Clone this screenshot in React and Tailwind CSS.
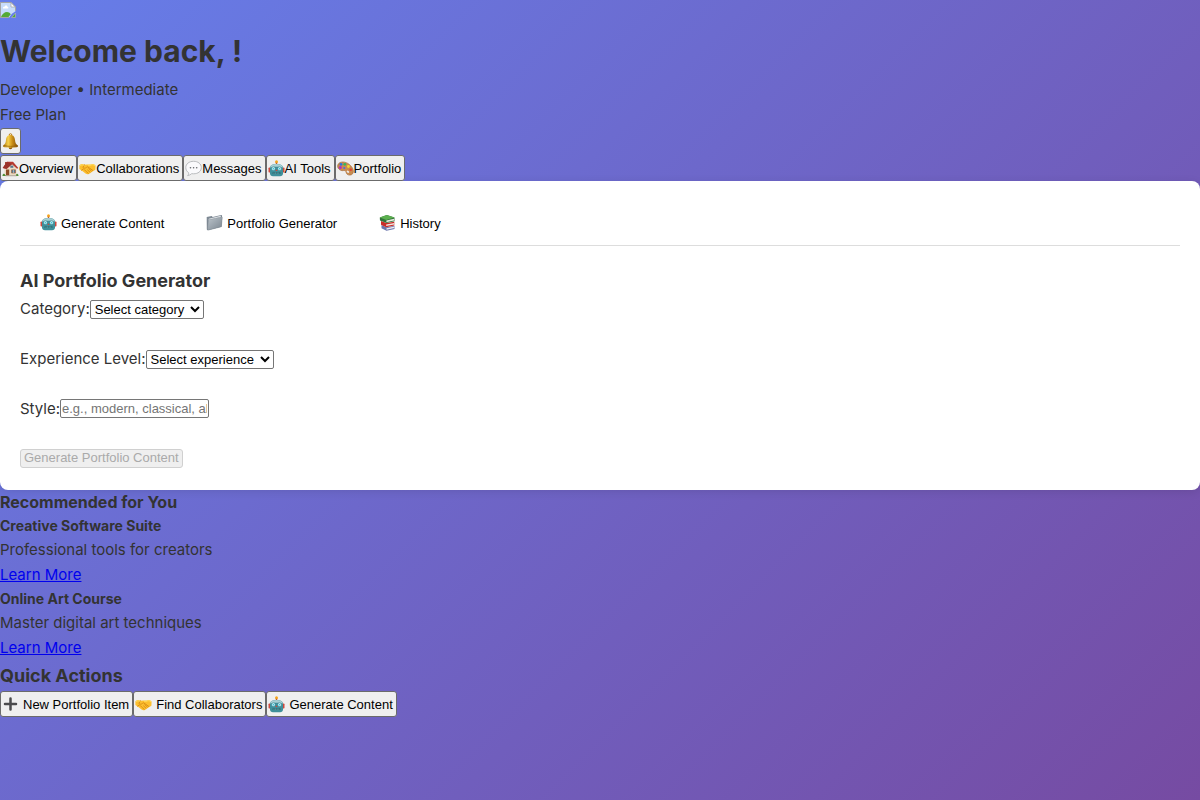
import React from "react";

const iconClass = "h-[17px] w-[17px] shrink-0";

function BrokenImage() {
  return (
    <svg viewBox="0 0 16 16" className="h-4 w-4" role="img" aria-label="Profile">
      <path d="M.5.5h10.7L15.5 5v4.200l-3.600 2.600-2.700 3.700H.5z" fill="#c7dcfb" />
      <path d="M1 15c1-3 3.500-5 6-5 1.500 0 2.800.8 3.800 2.200L8.500 15z" fill="#55aa35" />
      <path d="M3 6.500C2.500 5 4 4.500 4.500 4.800 5 3 7.500 3.300 7.500 5c1.200 0 1.200 1.500.3 1.500z" fill="#fff" />
      <path d="M9.200 15.500H.5V.5h10.700L15.500 5v4" fill="none" stroke="#a5a5a5" />
      <path d="M11 .8V5h4.200z" fill="#fff" stroke="#a5a5a5" strokeWidth=".7" />
      <path d="M15.500 11v4.500h-4z" fill="#55aa35" stroke="#b8b8b8" strokeWidth=".6" />
    </svg>
  );
}

function Bell() {
  return (
    <svg viewBox="0 0 17 17" className={iconClass} aria-hidden="true">
      <defs>
        <linearGradient id="gold" x1="0" x2="1">
          <stop offset="0" stopColor="#a8700c" />
          <stop offset=".35" stopColor="#f7d14a" />
          <stop offset=".62" stopColor="#c98d17" />
          <stop offset="1" stopColor="#7d4b07" />
        </linearGradient>
      </defs>
      <circle cx="8.500" cy="2" r="1.300" fill="none" stroke="#b8801b" />
      <circle cx="8.500" cy="14.400" r="1.800" fill="#8c5609" />
      <path d="M8.500 2C5.300 2 4.300 4.300 4 7c-.3 3-1 4.300-2.900 5.600-.6.800.2 1.500 1.300 1.700 3.500.6 8.700.6 12.200 0 1.100-.2 1.900-.9 1.300-1.700C14 11.300 13.300 10 13 7c-.3-2.700-1.300-5-4.500-5z" fill="url(#gold)" />
      <path d="M2 12.600c4.500 1 8.500 1 13 0" fill="none" stroke="#8c5a08" strokeWidth=".7" />
    </svg>
  );
}

function House() {
  return (
    <svg viewBox="0 0 17 17" className={iconClass} aria-hidden="true">
      <path d="M3 2h2v5H3z" fill="#a04d39" />
      <path d="M2.500 7.500L9 2l5.500 5.500v8h-12z" fill="#eadbc4" />
      <path d="M.7 8L5 1.800h6L16.300 8l-1.200.7L10 4.200 4.700 9z" fill="#b63a31" />
      <path d="M5 1.800L.7 8l3.800.8L10 4z" fill="#9a332b" />
      <path d="M8.300 5.600h3v2.200h-3z" fill="#58758c" />
      <path d="M4 9.500h3.200v6H4z" fill="#8b4d28" />
      <path d="M9.500 9.800h4v3.200h-4z" fill="#507b9c" stroke="#a8683f" strokeWidth=".7" />
      <path d="M11.500 9.800V13" stroke="#e6d5bd" strokeWidth=".6" />
      <path d="M.5 15.600c.2-2 2-2.500 2.700-.7h.6v1.200H.5zM14 16c-.2-1.200.3-2.200 1.200-2.200.8 0 1.300 1 1.300 2.200z" fill="#4f8e35" />
      <path d="M3.500 15.300h11v.9h-11z" fill="#a89b8b" />
    </svg>
  );
}

function Handshake() {
  return (
    <svg viewBox="0 0 17 17" className={iconClass} aria-hidden="true">
      <path d="M.4 5.300C2 3.900 3.500 3.800 5.300 4.700l2.800-.3 3.300.2c1.700-1 3.500-.7 5.200.8l-.2 4.300-2.500 1.500-3.700 2.500c-1.200.8-2.500.6-3.700-.2L2.700 10.600.4 9z" fill="#fcbf2e" />
      <path d="M5.300 4.700L4 7.300c.8 1.300 2.300 1.100 3.600 0l1.100-.5 5 3.600M2.500 10.300l1.800-1.500 1.200 1 .9.900.9.800 1 .8.800 1M9.700 8.500l2.700 2.600M8.600 10l2.400 2.200" fill="none" stroke="#d88a12" strokeWidth=".9" strokeLinecap="round" />
      <path d="M1.200 5.700c1.400-1.100 2.600-1.100 4-.2M9 5.200c1.200.3 2.300.2 3.500-.3 1.200-.4 2.200-.1 3.500.9" fill="none" stroke="#ffe36b" strokeWidth=".8" />
    </svg>
  );
}

function Speech() {
  return (
    <svg viewBox="0 0 17 17" className={iconClass} aria-hidden="true">
      <path d="M8.600 1.300c4.500 0 7.700 2.600 7.700 6.300s-3.200 6.200-7.700 6.200l-2-.1c-1 .9-2.200 1.700-4 1.900.9-.8 1.200-1.800 1-2.900C1.900 11.600.8 9.800.8 7.600c0-3.700 3.300-6.300 7.800-6.300z" fill="#fafafc" stroke="#b2b4b8" strokeWidth=".9" />
      <g fill="#66686c"><circle cx="5.500" cy="7.700" r=".8" /><circle cx="8.600" cy="7.700" r=".8" /><circle cx="11.700" cy="7.700" r=".8" /></g>
    </svg>
  );
}

function Robot() {
  return (
    <svg viewBox="0 0 17 17" className={iconClass} aria-hidden="true">
      <circle cx="8.500" cy="1.700" r="1.500" fill="#f6a51c" />
      <path d="M7.800 2.800h1.400v2H7.800z" fill="#b55b37" />
      <rect x=".5" y="7.500" width="2" height="5" rx=".8" fill="#cf493d" />
      <rect x="14.500" y="7.500" width="2" height="5" rx=".8" fill="#cf493d" />
      <path d="M2 8.200C2 5.300 4.500 4 8.500 4S15 5.300 15 8.200v5c0 2-1.200 3-3 3H5c-1.800 0-3-1-3-3z" fill="#3f8f9a" />
      <path d="M2.300 7.500C2.800 5 5 4.100 8.500 4.100s5.700.9 6.200 3.400c-3-1-9.400-1-12.400 0z" fill="#a9cfd3" />
      <circle cx="5.400" cy="8.700" r="1.900" fill="#e4ffff" stroke="#257b88" strokeWidth=".6" />
      <circle cx="11.600" cy="8.700" r="1.900" fill="#e4ffff" stroke="#257b88" strokeWidth=".6" />
      <circle cx="5.400" cy="8.700" r=".9" fill="#40bfd8" /><circle cx="11.600" cy="8.700" r=".9" fill="#40bfd8" />
      <path d="M8.500 9.300l1 1.600h-2z" fill="#d64436" />
      <rect x="4.500" y="12.100" width="8" height="2" rx=".7" fill="#276c76" />
      <path d="M5.500 13.100h6" stroke="#9fd0d0" strokeWidth=".7" strokeDasharray="1 .6" />
    </svg>
  );
}

function Palette() {
  return (
    <svg viewBox="0 0 17 17" className={iconClass} aria-hidden="true">
      <path d="M1.100 4.300C3.100 1 8.500 1.300 12.400 4.500c3.500 2.900 4.900 6.600 3.400 9-1.300 2-4 2-5.600.8-1.500-1.200-.7-2.700-2-3.500-1.400-.9-2.400.5-4.500-.5C.7 8.800 0 6.500 1.100 4.300z" fill="#c98c50" stroke="#9f6533" strokeWidth=".6" />
      <ellipse cx="10.900" cy="11.800" rx="1.400" ry="1" transform="rotate(35 10.900 11.800)" fill="#eee" />
      <circle cx="3.300" cy="7.500" r="1.500" fill="#b62fbb" />
      <circle cx="4" cy="4.300" r="1.400" fill="#2878df" />
      <circle cx="7.800" cy="4.300" r="1.400" fill="#38b956" />
      <circle cx="11.400" cy="6.500" r="1.400" fill="#f5d62e" />
      <circle cx="13.700" cy="9.700" r="1.300" fill="#e54135" />
      <circle cx="7.300" cy="8" r="1.100" fill="#4c6de1" />
    </svg>
  );
}

function Folder() {
  return (
    <svg viewBox="0 0 17 17" className={iconClass} aria-hidden="true">
      <defs><linearGradient id="steel" x2="1" y2="1"><stop stopColor="#bcc4cb" /><stop offset="1" stopColor="#7b8690" /></linearGradient></defs>
      <path d="M.7 3l5-1 1 1 8.500-2c.6 0 .9.300.9.800l-.5 11L2 16.300c-.8.100-1.200-.3-1.200-1z" fill="#7e8994" />
      <path d="M2.800 4.700L15 1.800l-.4 2-12 3z" fill="#eef1f4" />
      <path d="M3.200 5.600l12.200-2.700c.7-.1 1 .2.900.9l-1 9L2.600 16c-.8.200-1.200-.2-1.100-.9l.8-8.500c.1-.6.400-.9.900-1z" fill="url(#steel)" stroke="#78838c" strokeWidth=".4" />
    </svg>
  );
}

function Books() {
  return (
    <svg viewBox="0 0 17 17" className={iconClass} aria-hidden="true">
      <path d="M2.500 11l5 2.300 8-1.600v3.200L7.500 16.700l-5-2.500z" fill="#6a75ad" />
      <path d="M7.500 14.200l7.800-1.700v1.600l-7.800 1.600z" fill="#eceaf0" />
      <path d="M2 7l5.500 2 7.800-1.200v3.800L7.200 13.200 2 10.800z" fill="#c92c28" />
      <path d="M7.200 10.400l8-1.400v1.500l-8 1.500z" fill="#f2e6df" />
      <path d="M.8 3.600l7-2.700 7.700 2.700v3.700l-8 1.700L1 6.600z" fill="#32733a" />
      <path d="M.8 3.600l7-2.700 7.700 2.700-8.200 2.300z" fill="#5cb04f" />
      <path d="M7.400 6.600l7.700-1.800v1.700L7.400 8.200z" fill="#e6ebe0" />
    </svg>
  );
}

function Plus() {
  return (
    <svg viewBox="0 0 17 17" className={iconClass} aria-hidden="true">
      <path d="M8.500 2.500v11M3 8h11" stroke="#4b4b4d" strokeWidth="2.500" strokeLinecap="round" />
    </svg>
  );
}

const buttonClass =
  "flex h-[26px] items-center rounded-[3px] border border-[#6b6b6b] bg-[#efefef] font-['Liberation_Sans',sans-serif] text-[13px] leading-4 whitespace-nowrap text-black";

const labelClass = "pt-0.5 pr-0.5";

const navItems = [
  ["Overview", House],
  ["Collaborations", Handshake],
  ["Messages", Speech],
  ["AI Tools", Robot],
  ["Portfolio", Palette],
];

const aiTabs = [
  ["Generate Content", Robot],
  ["Portfolio Generator", Folder],
  ["History", Books],
];

const actions = [
  ["New Portfolio Item", Plus],
  ["Find Collaborators", Handshake],
  ["Generate Content", Robot],
];

const recommendations = [
  ["Creative Software Suite", "Professional tools for creators"],
  ["Online Art Course", "Master digital art techniques"],
];

const fieldClass =
  "h-[19px] rounded-[2px] border border-[#767676] bg-white font-['Liberation_Sans',sans-serif] text-[13px] leading-4";

export default function App() {
  return (
    <div className="min-h-screen bg-linear-[135deg,#667eea_0%,#764ba2_100%] font-['Inter',sans-serif] text-[15px] leading-[25px] text-[#333]">
      <header>
        <div className="h-[26px] pt-0.5"><BrokenImage /></div>
        <h1 className="text-[30px] leading-[51px] font-bold">Welcome back, !</h1>
        <p>Developer • Intermediate</p>
        <p>Free Plan</p>
        <button type="button" aria-label="Notifications" className={`${buttonClass} mt-px px-px`}><Bell /></button>
      </header>

      <nav className="mt-px flex" aria-label="Dashboard">
        {navItems.map(([label, Icon]) => (
          <button type="button" key={label} className={`${buttonClass} px-px`}><Icon /><span className={labelClass}>{label}</span></button>
        ))}
      </nav>

      <main className="rounded-lg bg-white p-5 shadow-[0_2px_10px_rgba(0,0,0,0.1)]">
        <div className="flex border-b border-[#ddd]">
          {aiTabs.map(([label, Icon]) => (
            <button type="button" key={label} className="flex h-11 items-center gap-1 pr-[22px] pl-5 font-['Liberation_Sans',sans-serif] text-[13px] text-black"><span className="pb-0.5"><Icon /></span>{label}</button>
          ))}
        </div>
        <form className="pt-5" onSubmit={(event) => event.preventDefault()}>
          <h3 className="text-lg leading-[30px] font-bold">AI Portfolio Generator</h3>
          <div className="flex flex-col gap-[25px]">
            <div className="flex items-center">
              <label htmlFor="category">Category:</label>
              <select id="category" className={`${fieldClass} mt-0.5 w-[114px] text-black`}><option>Select category</option></select>
            </div>
            <div className="flex items-center">
              <label htmlFor="experience">Experience Level:</label>
              <select id="experience" className={`${fieldClass} mt-0.5 w-32 text-black`}><option>Select experience</option></select>
            </div>
            <div className="flex items-center">
              <label htmlFor="style">Style:</label>
              <input id="style" type="text" placeholder="e.g., modern, classical, abstract" className={`${fieldClass} w-[149px] px-px placeholder:text-[#757575]`} />
            </div>
            <div className="flex h-6 items-center">
              <button type="submit" disabled className="h-[19px] rounded-[3px] border border-[#d0d0d0] bg-[#efefef] px-[3px] font-['Liberation_Sans',sans-serif] text-[13px] leading-4 text-[#aaa]">Generate Portfolio Content</button>
            </div>
          </div>
        </form>
      </main>

      <aside>
        <h4 className="text-base leading-[25px] font-bold">Recommended for You</h4>
        {recommendations.map(([title, text]) => (
          <article key={title}>
            <h5 className="text-sm leading-[22px] font-bold">{title}</h5>
            <p>{text}</p>
            <a href="#learn-more" className="block w-fit leading-[26px] text-[#0000ee] underline">Learn More</a>
          </article>
        ))}
        <h3 className="text-lg leading-[30px] font-bold">Quick Actions</h3>
        <div className="flex">
          {actions.map(([label, Icon]) => (
            <button type="button" key={label} className={`${buttonClass} gap-1 px-px`}><Icon /><span className={labelClass}>{label}</span></button>
          ))}
        </div>
      </aside>
    </div>
  );
}
